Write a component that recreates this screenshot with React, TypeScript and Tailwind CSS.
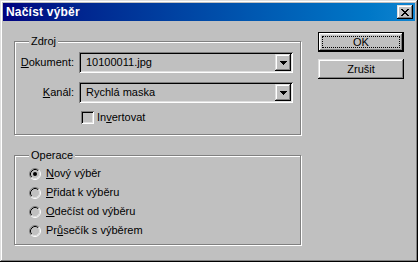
const raised =
  "shadow-[inset_-1px_-1px_#000,inset_1px_1px_#dfdfdf,inset_-2px_-2px_#808080,inset_2px_2px_#fff]";
const sunken =
  "shadow-[inset_1px_1px_#808080,inset_-1px_-1px_#fff,inset_2px_2px_#000,inset_-2px_-2px_#dfdfdf]";

const CloseGlyph = () => (
  <svg width="8" height="7" viewBox="0 0 8 7" shapeRendering="crispEdges">
    <path
      fill="#000"
      d="M0 0h2v1H0zM6 0h2v1H6zM1 1h2v1H1zM5 1h2v1H5zM2 2h4v1H2zM3 3h2v1H3zM2 4h4v1H2zM1 5h2v1H1zM5 5h2v1H5zM0 6h2v1H0zM6 6h2v1H6z"
    />
  </svg>
);

const Arrow = () => (
  <svg width="7" height="4" viewBox="0 0 7 4" shapeRendering="crispEdges">
    <path fill="#000" d="M0 0h7v1H0zM1 1h5v1H1zM2 2h3v1H2zM3 3h1v1H3z" />
  </svg>
);

const Radio = ({ checked }: { checked?: boolean }) => (
  <svg width="12" height="12" viewBox="0 0 12 12" className="shrink-0">
    <circle cx="6" cy="6" r="4.5" fill="#c0c0c0" />
    <path d="M2.11 9.89A5.5 5.5 0 0 1 9.89 2.11" fill="none" stroke="#808080" />
    <path d="M9.89 2.11A5.5 5.5 0 0 1 2.11 9.89" fill="none" stroke="#fff" />
    <path d="M2.82 9.18A4.5 4.5 0 0 1 9.18 2.82" fill="none" stroke="#000" />
    <path d="M9.18 2.82A4.5 4.5 0 0 1 2.82 9.18" fill="none" stroke="#dfdfdf" />
    {checked && <circle cx="6" cy="6" r="2" fill="#000" />}
  </svg>
);

const Combo = ({ value }: { value: string }) => (
  <div className={`w-[214px] h-[21px] flex items-center justify-between pl-[7px] pr-[2px] ${sunken}`}>
    <span>{value}</span>
    <div className={`w-[16px] h-[17px] flex items-center justify-center pt-[1px] ${raised}`}>
      <Arrow />
    </div>
  </div>
);

const GroupBox = ({ title, className, children }: { title: string; className: string; children: React.ReactNode }) => (
  <div className={`relative border border-[#808080] shadow-[inset_1px_1px_#fff,1px_1px_#fff] ${className}`}>
    <span className="absolute -top-[7px] left-[14px] px-[2px] bg-[#c0c0c0] leading-[13px]">{title}</span>
    {children}
  </div>
);

export default function App() {
  const ops: [string, string, string, boolean][] = [
    ["", "N", "ový výběr", true],
    ["", "P", "řidat k výběru", false],
    ["", "O", "dečíst od výběru", false],
    ["Pr", "ů", "sečík s výběrem", false],
  ];

  return (
    <div className="w-[418px] h-[262px] bg-[#c0c0c0] p-[3px] flex flex-col text-[11px] leading-[13px] text-black font-['Liberation_Sans',Arial,sans-serif] shadow-[inset_-1px_-1px_#000,inset_1px_1px_#dfdfdf,inset_-2px_-2px_#808080,inset_2px_2px_#fff]">
      <div className="h-[18px] flex items-center justify-between pl-[3px] pr-[2px] bg-linear-to-r from-[#000080] to-[#1084d0]">
        <span className="text-white font-bold text-[12px] tracking-[0.2px]">Načíst výběr</span>
        <div className={`w-[16px] h-[14px] flex items-center justify-center bg-[#c0c0c0] ${raised}`}>
          <CloseGlyph />
        </div>
      </div>

      <div className="flex items-start pt-[11px] pl-[11px]">
        <div className="mt-[9px] w-[287px] flex flex-col">
          <GroupBox title="Zdroj" className="pt-[10px] pb-[10px]">
            <div className="flex items-center h-[21px]">
              <span className="w-[64px] text-right pr-[5px]">
                <u>D</u>okument:
              </span>
              <Combo value="10100011.jpg" />
            </div>
            <div className="flex items-center h-[21px] mt-[9px]">
              <span className="w-[64px] text-right pr-[5px]">
                <u>K</u>anál:
              </span>
              <Combo value="Rychlá maska" />
            </div>
            <div className="flex items-center h-[13px] mt-[8px] ml-[66px]">
              <div className={`w-[13px] h-[13px] bg-[#c0c0c0] ${sunken}`} />
              <span className="ml-[3px]">
                In<u>v</u>ertovat
              </span>
            </div>
          </GroupBox>

          <GroupBox title="Operace" className="mt-[20px] pt-[8px] pb-[4px]">
            {ops.map(([pre, key, rest, checked]) => (
              <div key={key} className="flex items-center h-[19px] pl-[14px]">
                <Radio checked={checked} />
                <span className="ml-[5px]">
                  {pre}
                  <u>{key}</u>
                  {rest}
                </span>
              </div>
            ))}
          </GroupBox>
        </div>

        <div className="ml-[17px] flex flex-col gap-[7px]">
          <div className="w-[86px] h-[20px] p-[4px] shadow-[inset_0_0_0_1px_#000,inset_-2px_-2px_#000,inset_2px_2px_#fff,inset_-3px_-3px_#808080,inset_3px_3px_#dfdfdf]">
            <div className="h-full border border-dotted border-black flex items-center justify-center">OK</div>
          </div>
          <div className={`w-[86px] h-[20px] flex items-center justify-center ${raised}`}>Zrušit</div>
        </div>
      </div>
    </div>
  );
}
